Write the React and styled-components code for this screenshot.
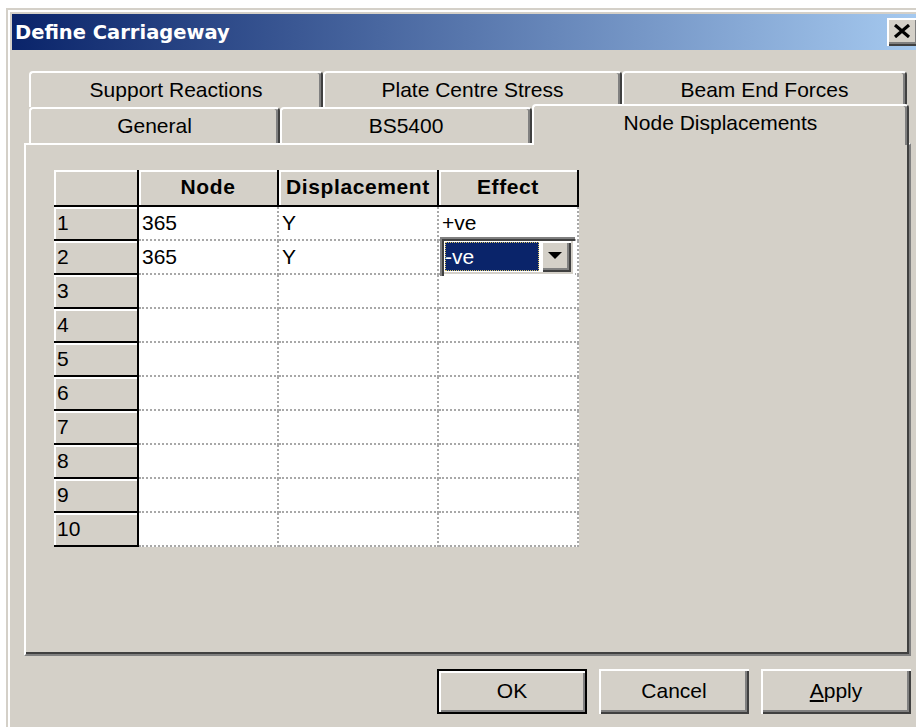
import React from "react";
import styled, { createGlobalStyle } from "styled-components";

const GlobalStyle = createGlobalStyle`
  html, body { margin: 0; padding: 0; background: #fff; overflow: hidden; }
  #root { width: 916px; height: 727px; overflow: hidden; }
`;

const FACE = "#d4d0c8";
const SHADOW = "#808080";
const DARK = "#404040";
const UI_FONT = `"Liberation Sans", Arial, sans-serif`;

const Screen = styled.div`
  width: 916px;
  height: 727px;
  overflow: hidden;
  background: #fff;
  padding: 8px 0 0 6px;
  box-sizing: border-box;
`;

const Window = styled.div`
  width: 923px;
  height: 740px;
  box-sizing: border-box;
  background: ${FACE};
  padding: 6px 6px 0 6px;
  box-shadow: inset 2px 2px 0 ${FACE}, inset 4px 4px 0 #fff;
  display: flex;
  flex-direction: column;
`;

const TitleBar = styled.div`
  height: 36px;
  display: flex;
  align-items: center;
  justify-content: space-between;
  padding: 0 4px 0 3px;
  background: linear-gradient(to right, #0a246a, #a6caf0);
`;

const TitleText = styled.span`
  font: bold 19.5px "DejaVu Sans", Verdana, sans-serif;
  color: #fff;
  white-space: nowrap;
`;

const raised = `
  background: ${FACE};
  box-shadow: inset 2px 2px 0 #fff, inset -2px -2px 0 ${DARK}, inset -4px -4px 0 ${SHADOW};
`;

const CloseButton = styled.div`
  ${raised}
  width: 32px;
  height: 28px;
  display: flex;
  align-items: center;
  justify-content: center;
  padding: 0 2px 2px 0;
  box-sizing: border-box;
`;

const Body = styled.div`
  padding: 21px 12px 0 12px;
  display: flex;
  flex-direction: column;
`;

const TabRow = styled.div`
  display: flex;
  height: 36px;
  padding-left: 5px;
`;

const Tab = styled.div`
  width: ${(p) => p.$w}px;
  height: ${(p) => (p.$active ? 41 : 36)}px;
  margin-top: ${(p) => (p.$active ? -3 : 0)}px;
  box-sizing: border-box;
  position: relative;
  z-index: ${(p) => (p.$active ? 2 : 0)};
  background: ${FACE};
  border-top: 2px solid #fff;
  border-left: 2px solid #fff;
  border-right: 2px solid ${DARK};
  border-radius: 4px 4px 0 0;
  box-shadow: inset -2px 0 0 ${SHADOW};
  display: flex;
  justify-content: center;
  padding-top: 5px;
  font: 21px ${UI_FONT};
  line-height: 24px;
  color: #000;
  white-space: nowrap;
`;

const Panel = styled.div`
  height: 513px;
  box-sizing: border-box;
  border-top: 2px solid #fff;
  border-left: 2px solid #fff;
  border-right: 2px solid ${SHADOW};
  border-bottom: 2px solid ${SHADOW};
  box-shadow: inset -2px -2px 0 ${DARK};
  padding: 25px 0 0 28px;
`;

const Grid = styled.div`
  display: grid;
  grid-template-columns: 85px 140px 160px 140px;
  grid-template-rows: 37px repeat(10, 34px);
  width: 525px;
  font: 21px ${UI_FONT};
  color: #000;
`;

const HeadCell = styled.div`
  background: ${FACE};
  box-sizing: border-box;
  box-shadow: inset 2px 2px 0 #fff;
  border-right: 2px solid #000;
  border-bottom: 2px solid #000;
  display: flex;
  align-items: center;
  justify-content: center;
  font-weight: bold;
  letter-spacing: 0.6px;
  padding-bottom: 1px;
`;

const RowHead = styled.div`
  background: ${FACE};
  box-sizing: border-box;
  box-shadow: inset 2px 2px 0 #fff;
  border-right: 2px solid #000;
  border-bottom: 2px solid #000;
  display: flex;
  align-items: center;
  padding-left: 3px;
`;

const Cell = styled.div`
  position: relative;
  background: #fff;
  box-sizing: border-box;
  border-right: 2px dotted #a8a8a8;
  border-bottom: 2px dotted #a8a8a8;
  display: flex;
  align-items: center;
  padding-left: 3px;
  white-space: nowrap;
`;

/* in-cell drop-down editor floating over the active cell */
const Combo = styled.div`
  position: absolute;
  left: 1px;
  top: -4px;
  width: 135px;
  height: 39px;
  z-index: 1;
  box-sizing: border-box;
  padding: 4px;
  background: #fff;
  box-shadow: inset 2px 2px 0 ${SHADOW}, inset 4px 4px 0 ${DARK},
    inset -2px -2px 0 #fff, inset -4px -4px 0 ${FACE};
  display: flex;
`;

const ComboField = styled.div`
  flex: 1;
  padding: 1px 2px 1px 1px;
  background: #fff;
  display: flex;
`;

const ComboValue = styled.div`
  flex: 1;
  background: #0a246a;
  color: #fff;
  outline: 1px dotted #d8c468;
  outline-offset: -1px;
  display: flex;
  align-items: center;
  padding-left: 0;
`;

const ComboButton = styled.div`
  ${raised}
  width: 30px;
  display: flex;
  align-items: center;
  justify-content: center;
  padding: 0 2px 2px 0;
  box-sizing: border-box;
`;

const ButtonRow = styled.div`
  display: flex;
  justify-content: flex-end;
  gap: 12px;
  margin-top: 13px;
`;

const Button = styled.div`
  width: 150px;
  height: 45px;
  box-sizing: border-box;
  background: ${FACE};
  ${(p) =>
    p.$default
      ? `border: 2px solid #000; box-shadow: inset 2px 2px 0 #fff, inset -2px -2px 0 ${SHADOW};`
      : `box-shadow: inset 2px 2px 0 #fff, inset -2px -2px 0 ${DARK}, inset -4px -4px 0 ${SHADOW};`}
  display: flex;
  align-items: center;
  justify-content: center;
  font: 21px ${UI_FONT};
  color: #000;
  padding-bottom: 2px;
`;

const tabRows = [
  [
    { label: "Support Reactions", w: 294 },
    { label: "Plate Centre Stress", w: 299 },
    { label: "Beam End Forces", w: 285 },
  ],
  [
    { label: "General", w: 251 },
    { label: "BS5400", w: 252 },
    { label: "Node Displacements", w: 377, active: true },
  ],
];

const rows = [
  { node: "365", disp: "Y", effect: "+ve" },
  { node: "365", disp: "Y", effect: "-ve", editing: true },
  ...Array.from({ length: 8 }, () => ({ node: "", disp: "", effect: "" })),
];

const CloseIcon = () => (
  <svg width="18" height="14" viewBox="0 0 18 14">
    <path d="M2 1 L16 13 M16 1 L2 13" stroke="#000" strokeWidth="3.2" />
  </svg>
);

const DownArrow = () => (
  <svg width="14" height="7" viewBox="0 0 14 7">
    <path d="M0 0 H14 L7 7 Z" fill="#000" />
  </svg>
);

export default function App() {
  return (
    <>
      <GlobalStyle />
      <Screen>
        <Window>
          <TitleBar>
            <TitleText>Define Carriageway</TitleText>
            <CloseButton>
              <CloseIcon />
            </CloseButton>
          </TitleBar>
          <Body>
            {tabRows.map((row, i) => (
              <TabRow key={i}>
                {row.map((t) => (
                  <Tab key={t.label} $w={t.w} $active={t.active}>
                    {t.label}
                  </Tab>
                ))}
              </TabRow>
            ))}
            <Panel>
              <Grid>
                <HeadCell />
                <HeadCell>Node</HeadCell>
                <HeadCell>Displacement</HeadCell>
                <HeadCell>Effect</HeadCell>
                {rows.map((r, i) => (
                  <React.Fragment key={i}>
                    <RowHead>{i + 1}</RowHead>
                    <Cell>{r.node}</Cell>
                    <Cell>{r.disp}</Cell>
                    <Cell>
                      {r.editing ? (
                        <Combo>
                          <ComboField>
                            <ComboValue>{r.effect}</ComboValue>
                          </ComboField>
                          <ComboButton>
                            <DownArrow />
                          </ComboButton>
                        </Combo>
                      ) : (
                        r.effect
                      )}
                    </Cell>
                  </React.Fragment>
                ))}
              </Grid>
            </Panel>
            <ButtonRow>
              <Button $default>OK</Button>
              <Button>Cancel</Button>
              <Button>
                <span>
                  <u>A</u>pply
                </span>
              </Button>
            </ButtonRow>
          </Body>
        </Window>
      </Screen>
    </>
  );
}
